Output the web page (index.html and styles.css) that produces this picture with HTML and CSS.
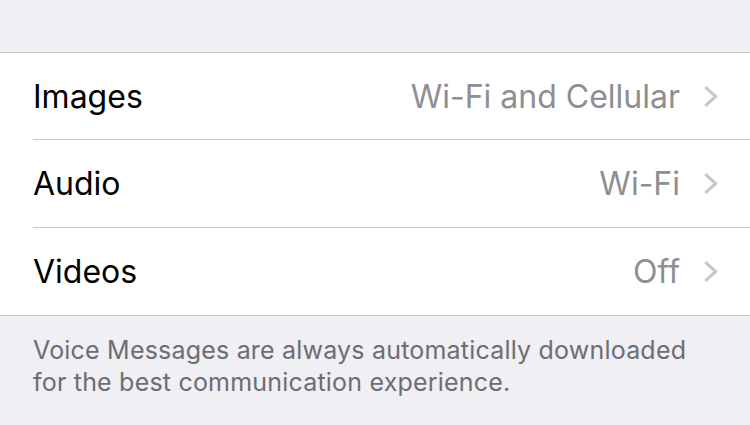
FILE: index.html
```html
<!DOCTYPE html>
<html>

<head>
    <title>Media Auto-Download</title>
    <link rel="stylesheet" href="styles.css">
</head>

<body>

    <div class="top-space"></div>

    <div class="group">
        <div class="row">
            <span class="label">Images</span>
            <span class="value">Wi-Fi and Cellular</span>
            <svg class="chevron" viewBox="0 0 14 22"><path d="M2 2 L12 11 L2 20" /></svg>
        </div>
        <div class="row">
            <span class="label">Audio</span>
            <span class="value">Wi-Fi</span>
            <svg class="chevron" viewBox="0 0 14 22"><path d="M2 2 L12 11 L2 20" /></svg>
        </div>
        <div class="row">
            <span class="label">Videos</span>
            <span class="value">Off</span>
            <svg class="chevron" viewBox="0 0 14 22"><path d="M2 2 L12 11 L2 20" /></svg>
        </div>
    </div>

    <p class="footer">Voice Messages are always automatically downloaded<br>for the best communication experience.</p>

</body>

</html>
```

FILE: styles.css
```css
body {
    margin: 0;
    background: #efeff4;
    font-family: Inter, 'Noto Sans', sans-serif;
    -webkit-font-smoothing: antialiased;
}

.top-space {
    height: 52px;
    border-bottom: 1px solid #c8c7cc;
}

.group {
    background: #ffffff;
    border-bottom: 1px solid #c8c7cc;
    padding-left: 33px;
}

.row {
    display: flex;
    align-items: center;
    height: 87px;
    padding-right: 32px;
    border-bottom: 1px solid #c8c7cc;
}

.row:first-child {
    height: 86px;
}

.row:last-child {
    border-bottom: none;
}

.label {
    flex: 1;
    font-size: 32px;
    color: #000000;
}

.value {
    font-size: 32px;
    color: #8e8e93;
    margin-right: 23px;
}

.chevron {
    width: 15px;
    height: 23px;
}

.chevron path {
    fill: none;
    stroke: #c7c7cc;
    stroke-width: 3;
}

.footer {
    margin: 0;
    padding: 18px 33px;
    font-size: 25px;
    line-height: 32px;
    letter-spacing: 0.2px;
    color: #6d6d72;
}
```
